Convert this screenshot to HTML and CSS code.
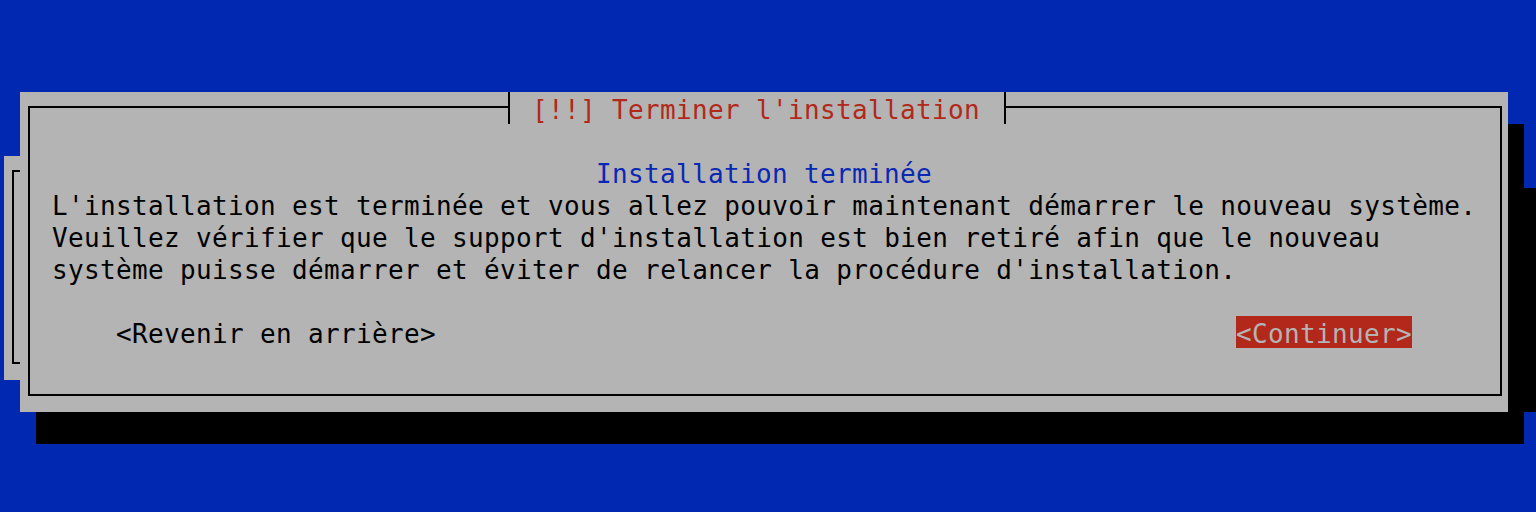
FILE: index.html
```html
<!DOCTYPE html>
<html lang="fr">
<head>
<meta charset="utf-8">
<title>Terminer l'installation</title>
<link rel="stylesheet" href="styles.css">
</head>
<body>
<div class="screen">
  <div class="bg-dialog"><div class="bg-frame"></div></div>
  <div class="bg-shadow-right"></div>
  <div class="shadow-right"></div>
  <div class="shadow-bottom"></div>
  <div class="dialog">
    <div class="frame"></div>
    <div class="title">[!!] Terminer l'installation</div>
    <div class="heading">Installation terminée</div>
    <div class="body">L'installation est terminée et vous allez pouvoir maintenant démarrer le nouveau système.
Veuillez vérifier que le support d'installation est bien retiré afin que le nouveau
système puisse démarrer et éviter de relancer la procédure d'installation.</div>
    <div class="btn btn-back">&lt;Revenir en arrière&gt;</div>
    <div class="btn btn-continue">&lt;Continuer&gt;</div>
  </div>
</div>
</body>
</html>
```
FILE: styles.css
```css
html, body {
  margin: 0;
  padding: 0;
  width: 1536px;
  height: 512px;
  overflow: hidden;
  background: #0028b0;
}
.screen {
  display: grid;
  grid-template-columns: repeat(96, 16px);
  grid-template-rows: repeat(16, 32px);
  margin: -4px 0 0 4px;
  font-family: "DejaVu Sans Mono", "Liberation Mono", monospace;
  font-size: 26px;
  letter-spacing: 0.35px;
  line-height: 32px;
  color: #000;
}
.bg-dialog {
  grid-column: 1 / 96;
  grid-row: 6 / 13;
  background: #b4b4b4;
  display: grid;
}
.bg-frame {
  margin: 14px 6px 16px 8px;
  border: 2px solid #000;
}
.bg-shadow-right {
  grid-column: 96 / 97;
  grid-row: 7 / 14;
  background: #000;
}
.shadow-right {
  grid-column: 95 / 96;
  grid-row: 5 / 15;
  background: #000;
}
.shadow-bottom {
  grid-column: 3 / 96;
  grid-row: 14 / 15;
  background: #000;
}
.dialog {
  grid-column: 2 / 95;
  grid-row: 4 / 14;
  background: #b4b4b4;
  display: grid;
  grid-template-columns: repeat(93, 16px);
  grid-template-rows: repeat(10, 32px);
  line-height: 36px;
}
.frame {
  grid-column: 1 / -1;
  grid-row: 1 / -1;
  margin: 14px 6px 16px 8px;
  border: 2px solid #000;
}
.title {
  grid-column: 31 / 63;
  grid-row: 1;
  margin: 0 6px 0 8px;
  padding-left: 22px;
  background: #b4b4b4;
  border-left: 2px solid #000;
  border-right: 2px solid #000;
  color: #b2281a;
  white-space: pre;
  overflow: hidden;
}
.heading {
  grid-column: 37 / span 22;
  grid-row: 3;
  color: #0a28b4;
  white-space: pre;
}
.body {
  grid-column: 3 / -1;
  grid-row: 4 / span 3;
  line-height: 32px;
  padding-top: 2px;
  white-space: pre-line;
}
.btn {
  grid-row: 8;
  white-space: pre;
}
.btn-back {
  grid-column: 7 / span 21;
}
.btn-continue {
  grid-column: 77 / span 11;
  background: #b2281a;
  color: #b4b4b4;
  overflow: hidden;
}
```
